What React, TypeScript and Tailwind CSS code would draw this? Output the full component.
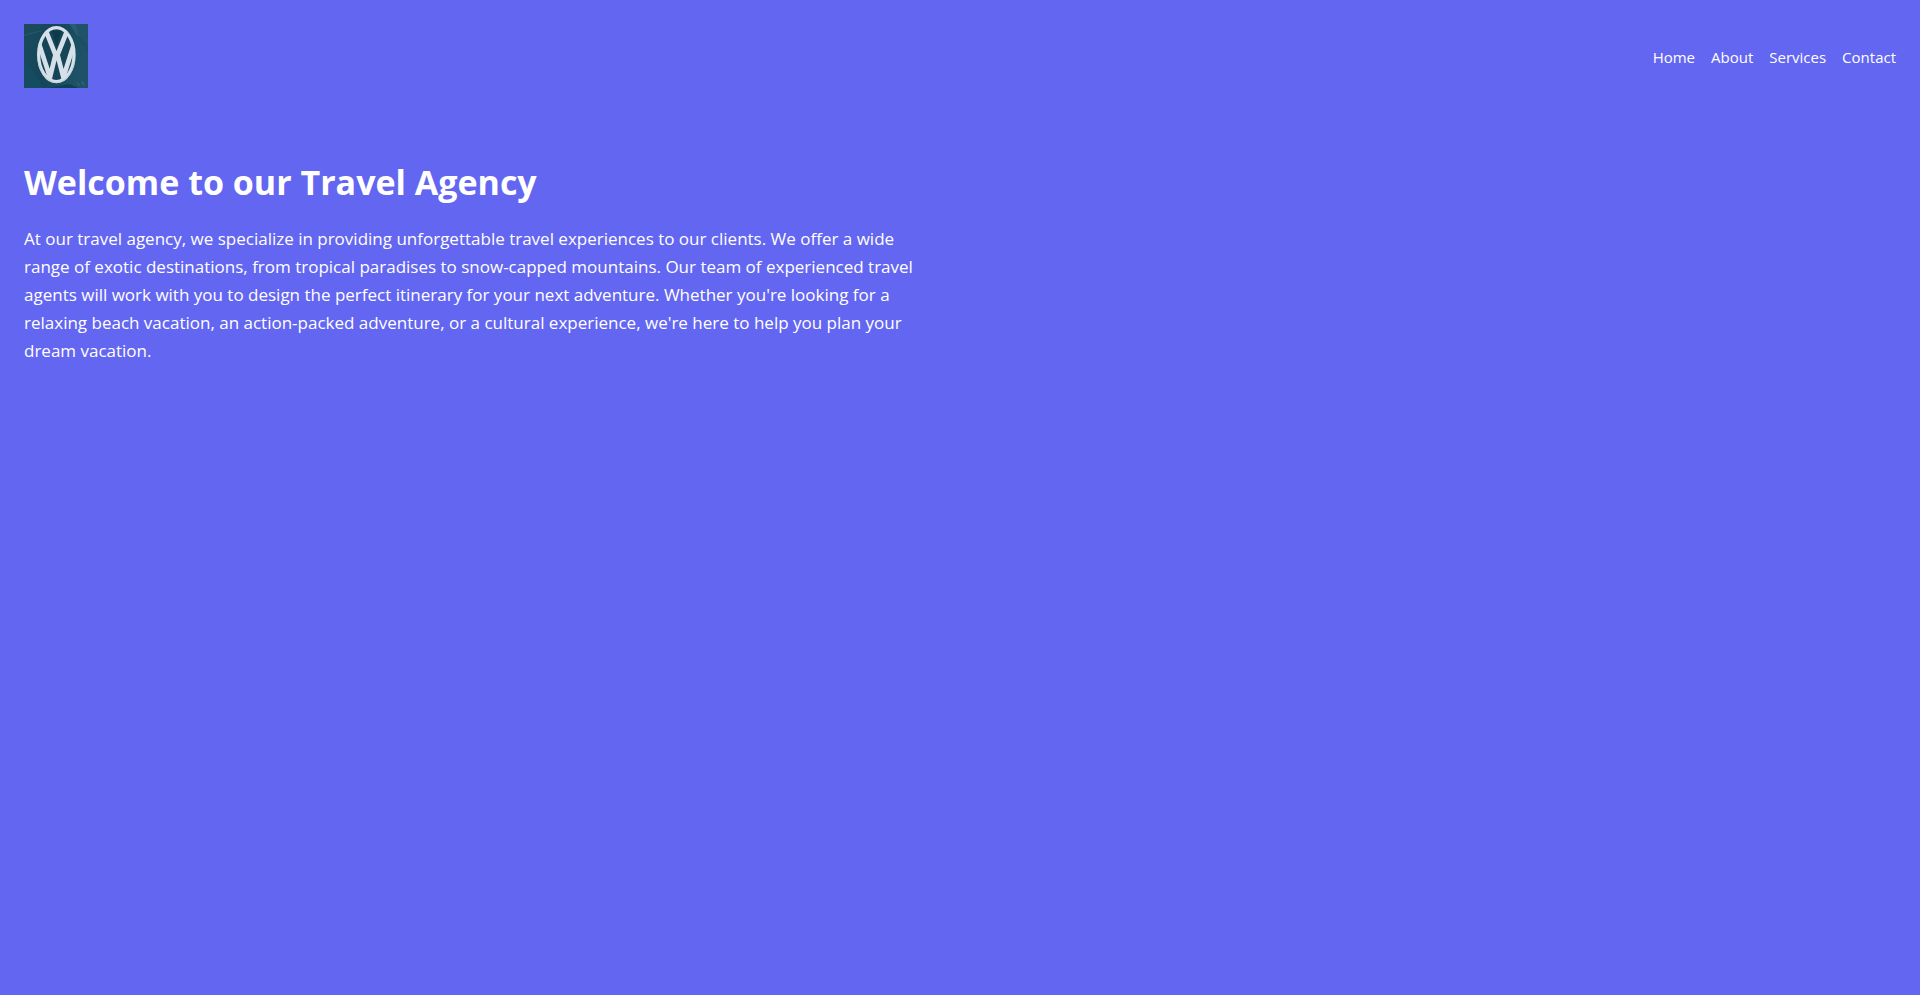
const links = ["Home", "About", "Services", "Contact"];

function Logo() {
  return (
    <svg
      className="block size-16"
      viewBox="24 24 192 192"
      role="img"
      aria-label="Logo"
    >
      <defs>
        <linearGradient id="metal" x1="0" y1="0" x2="1" y2="0.3">
          <stop offset="0" stopColor="#1a4c5e" />
          <stop offset="0.5" stopColor="#144558" />
          <stop offset="0.8" stopColor="#194e63" />
          <stop offset="1" stopColor="#1f5267" />
        </linearGradient>
        <clipPath id="badge">
          <ellipse cx="121" cy="116" rx="54" ry="82" />
        </clipPath>
      </defs>
      <rect x="24" y="24" width="192" height="192" fill="url(#metal)" />
      <path d="M24 24H80L62 50L24 62Z" fill="#1a4a5c" />
      <path d="M160 24h56v62l-34-30Z" fill="#2a5d72" />
      <path d="M178 24l12 44 26 40V24Z" fill="#1b4c63" opacity="0.6" />
      <path d="M24 130l44 60 10 26H24Z" fill="#154d60" />
      <path d="M98 216l60-12 30 12Z" fill="#0f4052" />
      <path d="M24 58L76 44" stroke="#2f6373" strokeWidth="2" />
      <path d="M184 200l6 8M198 196l6 12" stroke="#4f7c8c" strokeWidth="2" />
      <ellipse cx="121" cy="116" rx="52" ry="80" fill="#164557" />
      <path d="M108 44h28l-14 48Z" fill="#0f3a4b" />
      <path
        d="M88 40L117 113H126L155 40M70 86L102 184L118 118H125L142 184L173 86"
        fill="none"
        stroke="#d6e0e9"
        strokeWidth="14"
        clipPath="url(#badge)"
      />
      <ellipse
        cx="121"
        cy="116"
        rx="53"
        ry="81"
        fill="none"
        stroke="#d6e0e9"
        strokeWidth="10"
      />
      <path
        d="M66 136C74 176 96 199 121 200C147 199 168 176 176 136"
        fill="none"
        stroke="#b5c6d1"
        strokeWidth="2"
      />
    </svg>
  );
}

export default function App() {
  return (
    <div className="min-h-screen bg-[#6366f1] font-['Segoe_UI','Open_Sans',sans-serif] text-white">
      <header className="flex items-center justify-between p-6">
        <a href="#home">
          <Logo />
        </a>
        <nav className="pt-0.5">
          <ul className="flex gap-4 text-[15px] leading-6">
            {links.map((label) => (
              <li key={label}>
                <a href={`#${label.toLowerCase()}`}>{label}</a>
              </li>
            ))}
          </ul>
        </nav>
      </header>
      <main className="py-12">
        <section className="w-1/2 px-6">
          <h1 className="mb-5 text-[34px] leading-[45px] font-bold">
            Welcome to our Travel Agency
          </h1>
          <p className="text-[17px] leading-7">
            At our travel agency, we specialize in providing unforgettable
            travel experiences to our clients. We offer a wide range of exotic
            destinations, from tropical paradises to snow-capped mountains. Our
            team of experienced travel agents will work with you to design the
            perfect itinerary for your next adventure. Whether you're looking
            for a relaxing beach vacation, an action-packed adventure, or a
            cultural experience, we're here to help you plan your dream
            vacation.
          </p>
        </section>
      </main>
    </div>
  );
}
